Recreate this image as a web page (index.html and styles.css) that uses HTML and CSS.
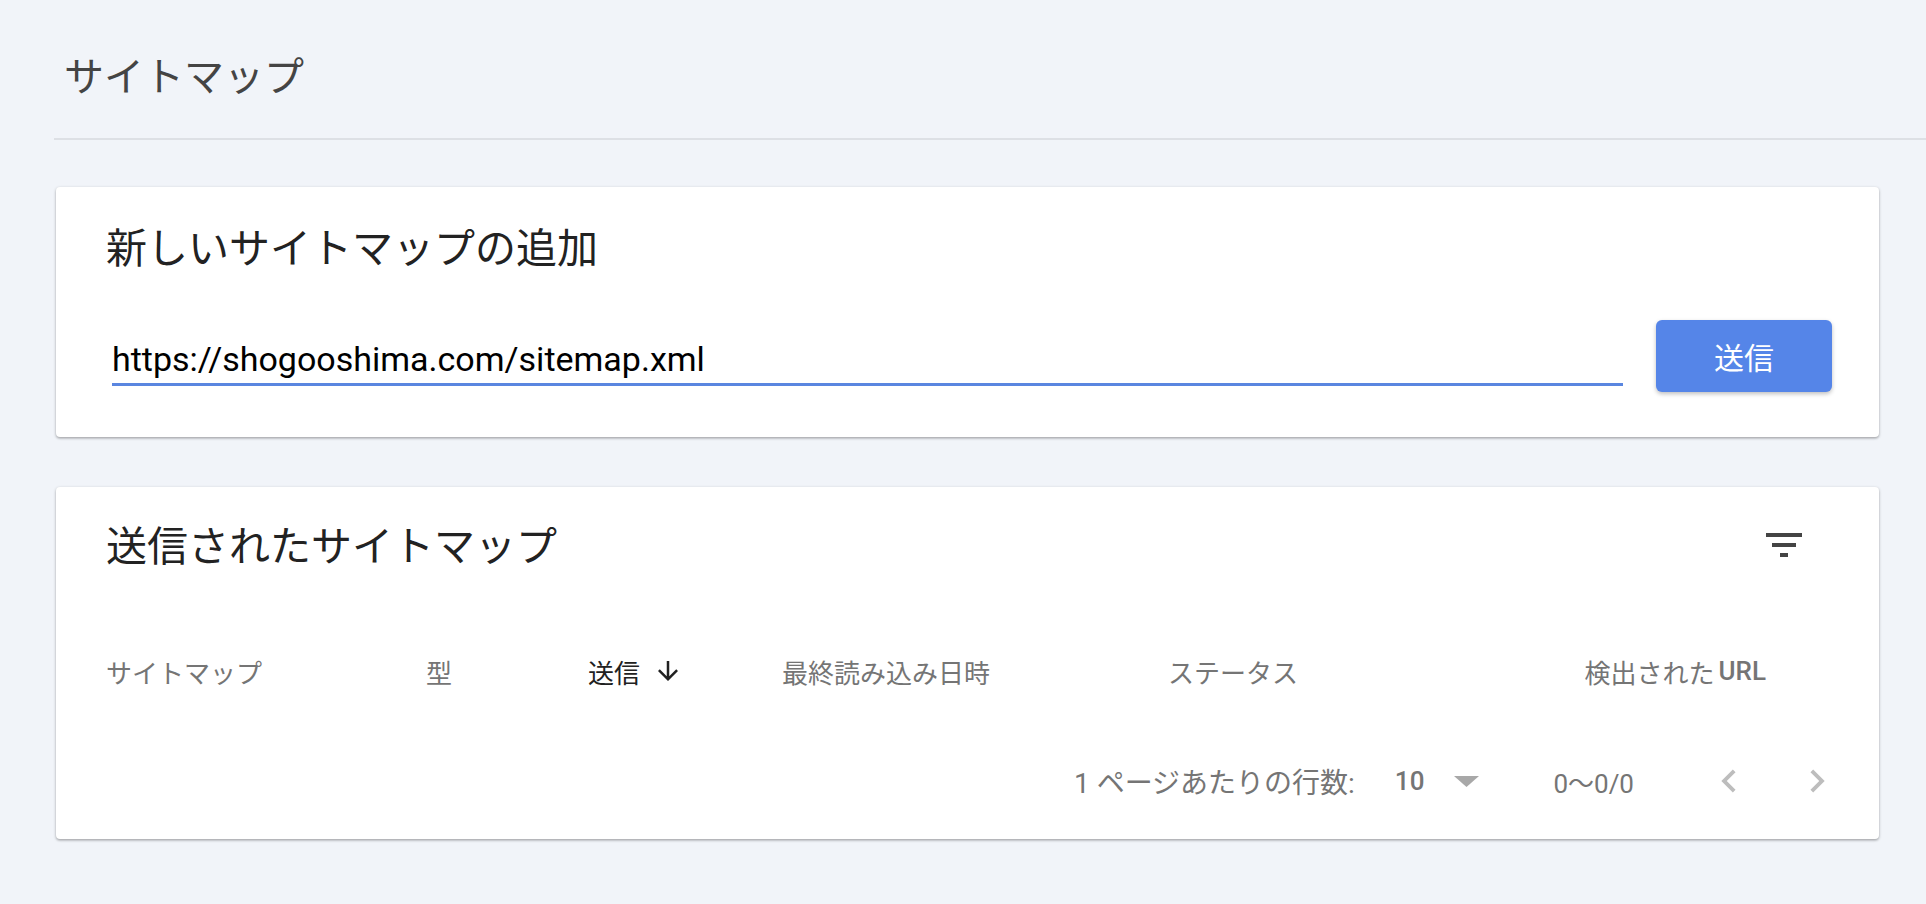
FILE: index.html
```html
<!DOCTYPE html>
<html lang="ja">
<head>
<meta charset="utf-8">
<title>サイトマップ</title>
<link rel="stylesheet" href="styles.css">
</head>
<body>
<header class="page-header">
  <h1 class="page-title">サイトマップ</h1>
</header>
<main class="content">
  <section class="card card-add">
    <h2 class="card-title">新しいサイトマップの追加</h2>
    <div class="add-row">
      <div class="url-field">https://shogooshima.com/sitemap.xml</div>
      <button class="submit-btn">送信</button>
    </div>
  </section>

  <section class="card card-list">
    <div class="list-top">
      <h2 class="card-title">送信されたサイトマップ</h2>
      <svg class="filter-icon" viewBox="0 0 24 24" width="48" height="48"><path d="M3 6h18v2H3zM6 11h12v2H6zM10 16h4v2h-4z" fill="#444"/></svg>
    </div>
    <div class="table-head">
      <div class="th">サイトマップ</div>
      <div class="th">型</div>
      <div class="th th-active">送信
        <svg class="sort-icon" viewBox="0 0 24 24" width="30" height="30"><path d="M20 12l-1.41-1.41L13 16.17V4h-2v12.17l-5.58-5.59L4 12l8 8 8-8z" fill="#212121"/></svg>
      </div>
      <div class="th">最終読み込み日時</div>
      <div class="th">ステータス</div>
      <div class="th th-right">検出された <span class="latin">URL</span></div>
    </div>
    <div class="table-foot">
      <span class="rows-label">1 ページあたりの行数:</span>
      <span class="rows-value">10</span>
      <svg class="drop-icon" viewBox="0 0 25 11" width="25" height="11"><path d="M0 0h25L12.5 11z" fill="#a8a8a8"/></svg>
      <span class="range">0〜0/0</span>
      <svg class="nav-icon" viewBox="0 0 24 24" width="46" height="46"><path d="M15.41 7.41L14 6l-6 6 6 6 1.41-1.41L10.83 12z" fill="#bdbdbd"/></svg>
      <svg class="nav-icon nav-next" viewBox="0 0 24 24" width="46" height="46"><path d="M10 6L8.59 7.41 13.17 12l-4.58 4.59L10 18l6-6z" fill="#bdbdbd"/></svg>
    </div>
  </section>
</main>
</body>
</html>
```

FILE: styles.css
```css
* { box-sizing: border-box; }

html, body {
  margin: 0;
  padding: 0;
}

body {
  background: #f1f4f9;
  font-family: Roboto, "Noto Sans CJK JP", sans-serif;
  color: #212121;
  width: 1926px;
  height: 904px;
  overflow: hidden;
}

.page-header {
  margin-left: 54px;
  height: 140px;
  border-bottom: 2px solid #dde0e5;
  display: flex;
  align-items: center;
  padding-left: 10px;
  padding-top: 18px;
}

.page-title {
  margin: 0;
  font-size: 40px;
  font-weight: 400;
  color: #444;
  line-height: 48px;
}

.content {
  padding: 47px 47px 0 56px;
  display: flex;
  flex-direction: column;
  gap: 50px;
}

.card {
  background: #fff;
  border-radius: 4px;
  box-shadow: 0 1px 3px rgba(0, 0, 0, 0.3), 0 2px 2px rgba(0, 0, 0, 0.08);
}

.card-title {
  margin: 0;
  font-size: 41px;
  font-weight: 400;
  line-height: 48px;
  color: #222;
}

.card-add {
  height: 250px;
  padding: 38px 47px 45px 50px;
}

.add-row {
  margin-top: 47px;
  display: flex;
  align-items: flex-start;
  gap: 33px;
}

.url-field {
  flex: 1;
  margin-left: 6px;
  padding-top: 15px;
  height: 66px;
  line-height: 48px;
  font-size: 34px;
  color: #000;
  border-bottom: 3px solid #5a86e0;
}

.submit-btn {
  width: 176px;
  height: 72px;
  border: none;
  border-radius: 6px;
  background: #5585e8;
  color: #fff;
  font-family: inherit;
  font-size: 30px;
  box-shadow: 0 2px 4px rgba(0, 0, 0, 0.25);
  padding: 0;
}

.card-list {
  height: 352px;
  padding: 34px 71px 0 50px;
}

.list-top {
  display: flex;
  justify-content: space-between;
  align-items: center;
  height: 48px;
}

.list-top .card-title {
  position: relative;
  top: 2px;
}

.filter-icon { display: block; }

.table-head {
  margin-top: 74px;
  margin-right: 42px;
  height: 56px;
  display: grid;
  grid-template-columns: 320px 162px 194px 386px 1fr auto;
  align-items: center;
  font-size: 26px;
  color: #757575;
}

.th {
  display: flex;
  align-items: center;
}

.th-active {
  color: #212121;
}

.sort-icon {
  margin-left: 13px;
}

.latin {
  font-weight: 500;
  margin-left: 4px;
}

.table-foot {
  margin-top: 54px;
  margin-right: -32px;
  height: 56px;
  display: flex;
  justify-content: flex-end;
  align-items: center;
  font-size: 26px;
  color: #757575;
}

.rows-label {
  font-size: 28px;
}

.rows-value {
  margin-left: 40px;
  font-weight: 500;
}

.drop-icon {
  margin-left: 30px;
}

.range {
  margin-left: 74px;
}

.nav-icon {
  margin-left: 72px;
}

.nav-icon.nav-next {
  margin-left: 42px;
}
```
